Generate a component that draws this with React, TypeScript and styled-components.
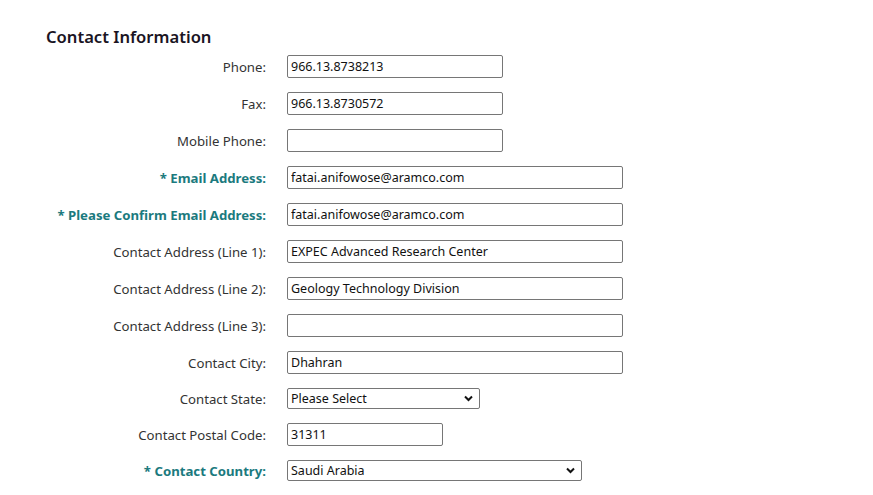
import styled, { createGlobalStyle } from "styled-components";

const GlobalStyle = createGlobalStyle`
  body {
    margin: 0;
    background: #ffffff;
    font-family: "Noto Sans", "Open Sans", Arial, sans-serif;
  }
`;

const Page = styled.div`
  width: 873px;
  height: 495px;
  padding-top: 25px;
  box-sizing: border-box;
  overflow: hidden;
`;

const Title = styled.h3`
  margin: 0 0 6px 46px;
  font-size: 16.6px;
  font-weight: 600;
  line-height: 24px;
  color: #1a1423;
`;

const Form = styled.div`
  display: grid;
  grid-template-columns: 266px auto;
  column-gap: 21px;
  row-gap: 14px;
  align-items: center;
`;

const Label = styled.label<{ $required?: boolean }>`
  justify-self: end;
  font-size: 13.2px;
  line-height: 18px;
  white-space: nowrap;
  color: ${(p) => (p.$required ? "#1b7a7e" : "#333333")};
  font-weight: ${(p) => (p.$required ? 700 : 400)};
`;

const Field = styled.input<{ $w: number }>`
  display: block;
  width: ${(p) => p.$w}px;
  height: 23px;
  box-sizing: border-box;
  border: 1px solid #767676;
  border-radius: 2px;
  padding: 0 3px;
  font-family: "Noto Sans", "Open Sans", Arial, sans-serif;
  font-size: 12.5px;
  color: #111;
  outline: none;
`;

const SelectWrap = styled.div<{ $w: number }>`
  position: relative;
  width: ${(p) => p.$w}px;
  height: 21px;
`;

const Select = styled.select`
  display: block;
  appearance: none;
  width: 100%;
  height: 100%;
  box-sizing: border-box;
  border: 1px solid #767676;
  border-radius: 2px;
  padding: 0 20px 0 3px;
  background: #fff;
  font-family: "Noto Sans", "Open Sans", Arial, sans-serif;
  font-size: 12.5px;
  color: #111;
  outline: none;
`;

const Chevron = styled.svg`
  position: absolute;
  right: 7px;
  top: 7px;
  pointer-events: none;
`;

type Row = {
  label: string;
  value?: string;
  width?: number;
  required?: boolean;
  select?: boolean;
};

const rows: Row[] = [
  { label: "Phone:", value: "966.13.8738213", width: 216 },
  { label: "Fax:", value: "966.13.8730572", width: 216 },
  { label: "Mobile Phone:", value: "", width: 216 },
  { label: "* Email Address:", value: "fatai.anifowose@aramco.com", width: 336, required: true },
  { label: "* Please Confirm Email Address:", value: "fatai.anifowose@aramco.com", width: 336, required: true },
  { label: "Contact Address (Line 1):", value: "EXPEC Advanced Research Center", width: 336 },
  { label: "Contact Address (Line 2):", value: "Geology Technology Division", width: 336 },
  { label: "Contact Address (Line 3):", value: "", width: 336 },
  { label: "Contact City:", value: "Dhahran", width: 336 },
  { label: "Contact State:", value: "Please Select", width: 193, select: true },
  { label: "Contact Postal Code:", value: "31311", width: 156 },
  { label: "* Contact Country:", value: "Saudi Arabia", width: 295, required: true, select: true },
];

export default function App() {
  return (
    <Page>
      <GlobalStyle />
      <Title>Contact Information</Title>
      <Form>
        {rows.map((r) => [
          <Label key={r.label + "l"} $required={r.required}>
            {r.label}
          </Label>,
          r.select ? (
            <SelectWrap key={r.label + "f"} $w={r.width ?? 216}>
              <Select defaultValue={r.value}>
                <option>{r.value}</option>
              </Select>
              <Chevron width="9" height="7" viewBox="0 0 9 7">
                <path d="M1 1.5 L4.5 5 L8 1.5" stroke="#111" strokeWidth="2" fill="none" />
              </Chevron>
            </SelectWrap>
          ) : (
            <Field key={r.label + "f"} $w={r.width ?? 216} defaultValue={r.value} />
          ),
        ])}
      </Form>
    </Page>
  );
}
